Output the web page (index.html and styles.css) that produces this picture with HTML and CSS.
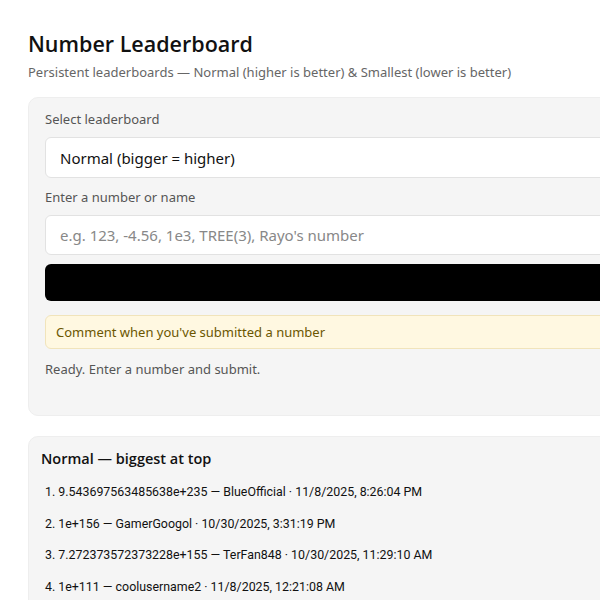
FILE: index.html
```html
<!DOCTYPE html>
<html lang="en">
<head>
  <meta charset="UTF-8" />
  <meta name="viewport" content="width=device-width, initial-scale=1.0" />
  <title>Number Leaderboard</title>
  <link rel="stylesheet" href="styles.css">
</head>
<body>
  <div class="wrap">
    <h1>Number Leaderboard</h1>
    <p class="sub">Persistent leaderboards — Normal (higher is better) &amp; Smallest (lower is better)</p>

    <div class="card">
      <label for="board">Select leaderboard</label>
      <select id="board">
        <option>Normal (bigger = higher)</option>
        <option>Smallest (lower = higher)</option>
      </select>

      <label for="num">Enter a number or name</label>
      <input type="text" id="num" placeholder="e.g. 123, -4.56, 1e3, TREE(3), Rayo's number">

      <button type="button" id="submitBtn"></button>

      <div class="notice">Comment when you've submitted a number</div>
      <div class="status">Ready. Enter a number and submit.</div>
    </div>

    <div class="card board">
      <h3>Normal — biggest at top</h3>
      <ol>
        <li>1. 9.543697563485638e+235 — BlueOfficial · 11/8/2025, 8:26:04 PM</li>
        <li>2. 1e+156 — GamerGoogol · 10/30/2025, 3:31:19 PM</li>
        <li>3. 7.272373572373228e+155 — TerFan848 · 10/30/2025, 11:29:10 AM</li>
        <li>4. 1e+111 — coolusername2 · 11/8/2025, 12:21:08 AM</li>
      </ol>
    </div>
  </div>
</body>
</html>
```

FILE: styles.css
```css
html, body {
  overflow: hidden;
}
body {
  margin: 0;
  padding: 28px;
  font-family: 'Noto Sans', Arial, sans-serif;
  color: #111;
  background: #fff;
}
.wrap {
  width: 660px;
}
h1 {
  margin: 1px 0 5px;
  font-family: 'Open Sans', 'Noto Sans', sans-serif;
  font-size: 21.5px;
  font-weight: 600;
}
.sub {
  margin: 0 0 16px;
  font-size: 13px;
  color: #666;
}
.card {
  background: #f5f5f5;
  border: 1px solid #eee;
  border-radius: 10px;
  padding: 12px 16px 37px;
  margin-bottom: 20px;
}
label {
  display: block;
  font-size: 13px;
  color: #555;
  margin: 0 0 9px;
}
select, input {
  display: block;
  width: 100%;
  box-sizing: border-box;
  height: 41px;
  margin-bottom: 10px;
  padding: 0 14px;
  border: 1px solid #e2e2e2;
  border-radius: 6px;
  background: #fff;
  font-family: inherit;
  font-size: 15px;
  color: #111;
  appearance: none;
}
input {
  height: 40px;
  margin-bottom: 9px;
}
input::placeholder {
  color: #888;
}
#submitBtn {
  display: block;
  width: 100%;
  height: 37px;
  border: none;
  border-radius: 6px;
  background: #000;
  cursor: pointer;
}
.notice {
  margin-top: 14px;
  padding: 7px 10px;
  background: #fff8e1;
  border: 1px solid #f1e4bb;
  border-radius: 6px;
  font-size: 13px;
  color: #6b5600;
}
.status {
  margin-top: 11px;
  font-size: 13px;
  color: #555;
}
.board {
  padding: 12px 12px;
}
.board h3 {
  margin: 0 0 8px;
  font-family: 'Open Sans', 'Noto Sans', sans-serif;
  font-size: 14.5px;
  font-weight: 600;
}
.board ol {
  list-style: none;
  margin: 0;
  padding: 0 4px;
}
.board li {
  font-family: Roboto, 'Noto Sans', sans-serif;
  font-size: 12.4px;
  line-height: 31.5px;
}
```
